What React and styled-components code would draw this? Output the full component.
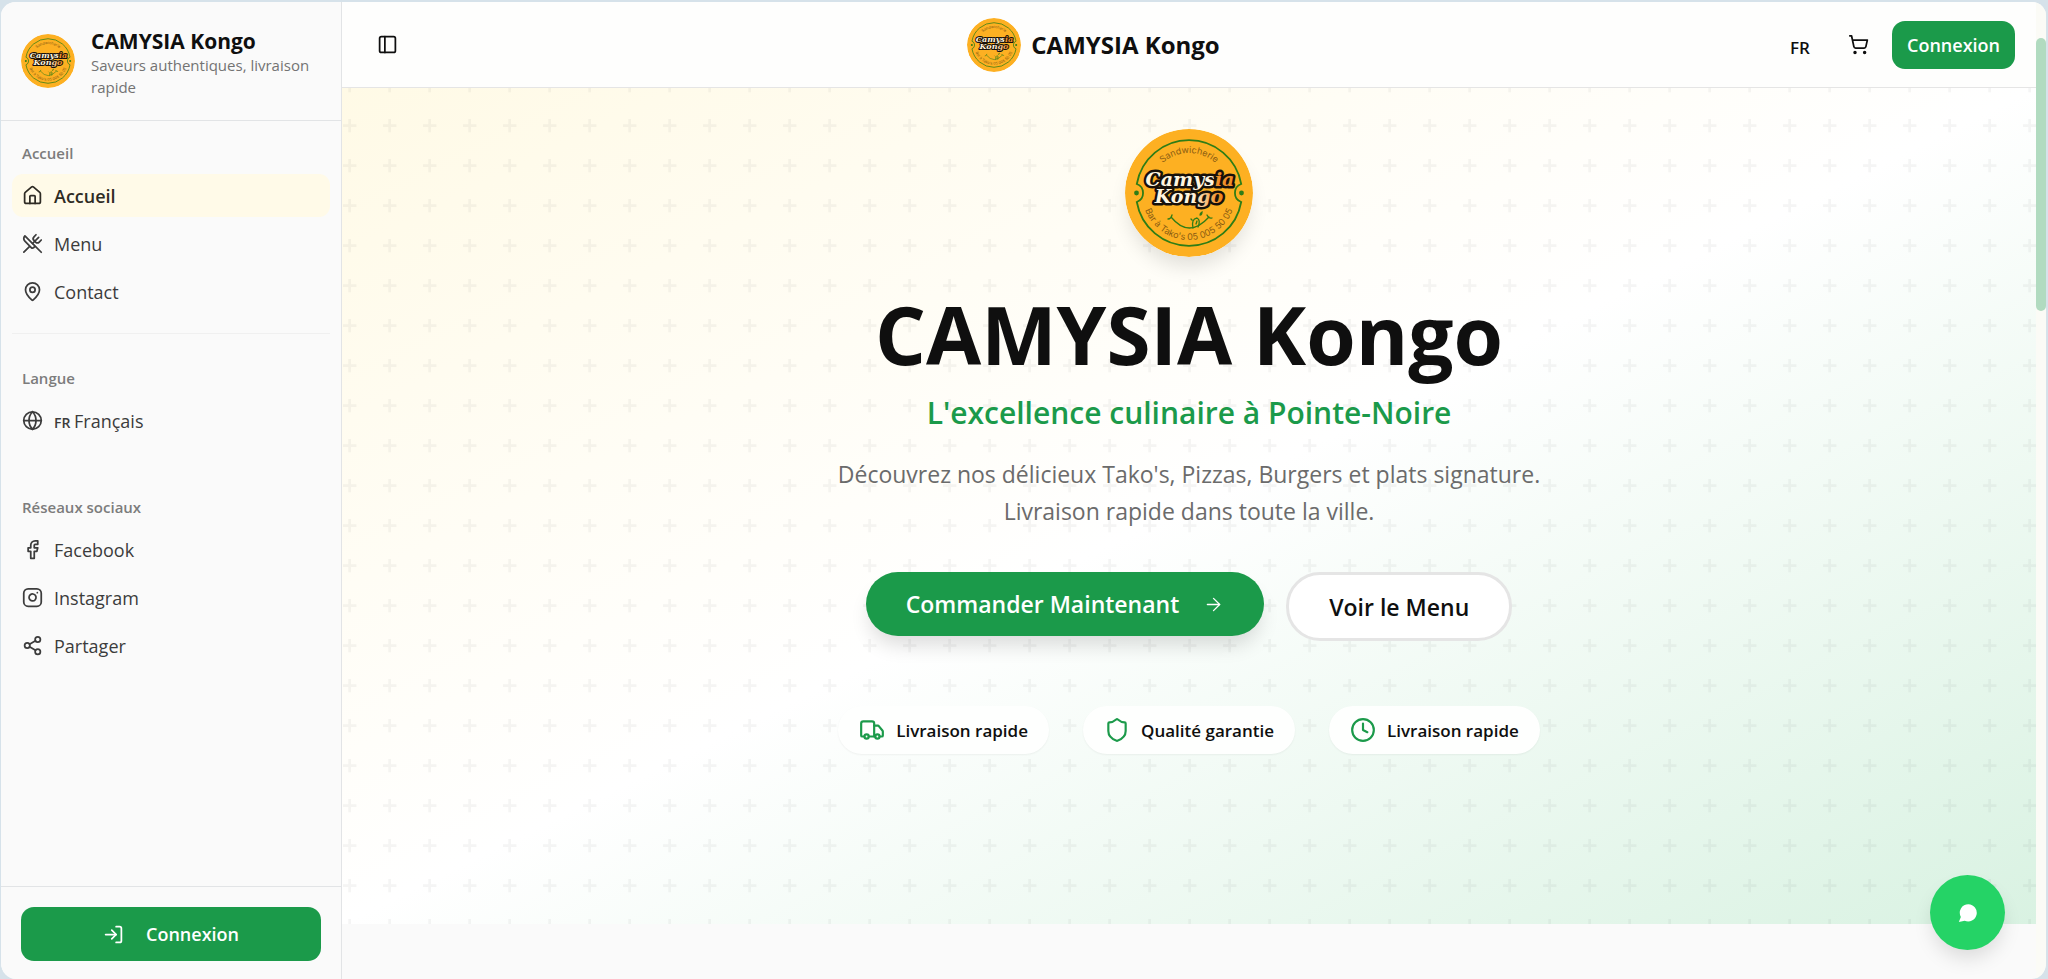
import React from "react";
import styled, { createGlobalStyle, css } from "styled-components";
import {
  ArrowRight,
  Clock,
  Facebook,
  Globe,
  House,
  Instagram,
  LogIn,
  MapPin,
  PanelLeft,
  Share2,
  Shield,
  ShoppingCart,
  Truck,
  UtensilsCrossed,
} from "lucide-react";

const green = "#1b9a4a";
const plusTile =
  "url(\"data:image/svg+xml,%3Csvg width='60' height='60' viewBox='0 0 60 60' xmlns='http://www.w3.org/2000/svg'%3E%3Cg fill='%23000' fill-opacity='0.04'%3E%3Cpath d='M36 34v-4h-2v4h-4v2h4v4h2v-4h4v-2h-4zm0-30V0h-2v4h-4v2h4v4h2V6h4V4h-4zM6 34v-4H4v4H0v2h4v4h2v-4h4v-2H6zM6 4V0H4v4H0v2h4v4h2V6h4V4H6z'/%3E%3C/g%3E%3C/svg%3E\")";

const GlobalStyle = createGlobalStyle`
  * {
    box-sizing: border-box;
    margin: 0;
    padding: 0;
  }
  body {
    background-color: #d6e2ea;
    color: #0f0f0f;
    font-family: "Open Sans", "Noto Sans", sans-serif;
    font-size: 18px;
  }
  button {
    font-family: inherit;
    cursor: pointer;
  }
  a {
    color: inherit;
    text-decoration: none;
  }
`;

const Window = styled.div`
  display: flex;
  height: 100vh;
  border: solid #d6e2ea;
  border-width: 2px 2px 0 1px;
  border-radius: 16px;
  overflow: hidden;
  background-color: #fafafa;
`;

const Sidebar = styled.aside`
  display: flex;
  flex-direction: column;
  width: 341px;
  flex-shrink: 0;
  border-right: 1px solid #e2e4e6;
  background-color: #fafafa;
`;

const Brand = styled.div`
  display: flex;
  align-items: center;
  gap: 16px;
  height: 119px;
  padding: 0 20px;
  border-bottom: 1px solid #e2e4e6;
`;

const BrandInfo = styled.div`
  padding-top: 4px;
`;

const BrandName = styled.h2`
  font-size: 21px;
  line-height: 26px;
  font-weight: 700;
`;

const BrandText = styled.p`
  font-size: 15px;
  line-height: 22px;
  color: #737373;
`;

const Nav = styled.nav`
  flex: 1;
`;

const Group = styled.section`
  padding: 11px 11px 20px;
  margin-bottom: ${({ $gap }) => $gap || 0}px;
`;

const GroupTitle = styled.h3`
  padding: 0 10px;
  line-height: 42px;
  font-size: 15px;
  font-weight: 600;
  color: #7c7c7c;
`;

const List = styled.ul`
  display: flex;
  flex-direction: column;
  gap: 5px;
  list-style: none;
`;

const NavLink = styled.a`
  display: flex;
  align-items: center;
  gap: 11px;
  height: 43px;
  padding: 0 10px;
  border-radius: 11px;
  color: #3c3c3c;
  ${({ $active }) =>
    $active &&
    css`
      background-color: #fffae8;
      color: #2e2b24;
      font-weight: 600;
    `}
`;

const Flag = styled.span`
  font-size: 14px;
  font-weight: 600;
`;

const Divider = styled.hr`
  margin: 0 11px 12px;
  border: none;
  border-top: 1px solid #f0f0f0;
`;

const SidebarFooter = styled.div`
  padding: 20px 20px 18px;
  border-top: 1px solid #e2e4e6;
`;

const Button = styled.button`
  display: flex;
  align-items: center;
  justify-content: center;
  gap: ${({ $gap }) => $gap || 0}px;
  width: ${({ $wide }) => ($wide ? "100%" : "auto")};
  height: ${({ $wide }) => ($wide ? 54 : 48)}px;
  padding: 0 15px;
  border: none;
  border-radius: 13px;
  background-color: ${green};
  color: #fff;
  font-size: 18px;
  font-weight: 600;
`;

const Main = styled.div`
  display: flex;
  flex-direction: column;
  flex: 1;
  min-width: 0;
`;

const Header = styled.header`
  display: flex;
  align-items: center;
  justify-content: space-between;
  height: 86px;
  flex-shrink: 0;
  padding: 0 21px;
  border-bottom: 1px solid #e5e5e5;
  background-color: #fefefd;
`;

const HeaderBrand = styled.div`
  display: flex;
  align-items: center;
  gap: 10px;
`;

const HeaderTitle = styled.span`
  font-size: 24px;
  font-weight: 700;
`;

const IconButton = styled.button`
  display: flex;
  align-items: center;
  justify-content: center;
  width: 48px;
  height: 48px;
  border: none;
  background: none;
  color: #0f0f0f;
`;

const LanguageButton = styled(IconButton)`
  padding-top: 6px;
  font-size: 17px;
  font-weight: 600;
`;

const Actions = styled.div`
  display: flex;
  align-items: center;
  justify-content: flex-end;
  gap: 10px;
`;

const Hero = styled.main`
  display: flex;
  flex-direction: column;
  align-items: center;
  height: 836px;
  flex-shrink: 0;
  padding-top: 41px;
  text-align: center;
  background-image: ${plusTile},
    linear-gradient(to bottom right, #fffae6, #ffffff 50%, #d9f2e2);
  background-size: 80px 80px, auto;
  background-position: 1px -9px, 0 0;
`;

const Badge = styled.svg`
  display: block;
  flex-shrink: 0;
  border-radius: 50%;
  ${({ $shadow }) =>
    $shadow && "box-shadow: 0 13px 20px -4px rgba(0, 0, 0, 0.12);"}
`;

const Title = styled.h1`
  margin-top: 31px;
  font-size: 80px;
  line-height: 92px;
  font-weight: 700;
`;

const Subtitle = styled.p`
  margin-top: 12px;
  font-size: 30px;
  line-height: 42px;
  font-weight: 600;
  color: ${green};
`;

const Lead = styled.p`
  max-width: 760px;
  margin-top: 22px;
  font-size: 23px;
  line-height: 37px;
  color: #6b6b6b;
`;

const Buttons = styled.div`
  display: flex;
  align-items: flex-start;
  gap: 22px;
  margin-top: 42px;
`;

const PillLink = styled.a`
  display: flex;
  align-items: center;
  gap: 24px;
  height: 64px;
  padding: 0 40px;
  border-radius: 34px;
  background-color: ${green};
  box-shadow: 0 13px 20px -4px rgba(0, 0, 0, 0.14);
  color: #fff;
  font-size: 23px;
  font-weight: 600;
  ${({ $outline }) =>
    $outline &&
    css`
      height: 69px;
      border: 3px solid #e5e5e5;
      background-color: #fff;
      box-shadow: none;
      color: #0f0f0f;
    `}
`;

const Features = styled.ul`
  display: flex;
  gap: 34px;
  margin-top: 65px;
  list-style: none;
`;

const Feature = styled.li`
  display: flex;
  align-items: center;
  gap: 11px;
  height: 48px;
  padding: 0 21px;
  border-radius: 24px;
  background-color: #fefffe;
  box-shadow: 0 1px 2px rgba(0, 0, 0, 0.05);
  font-size: 17px;
  font-weight: 600;
  svg {
    color: ${green};
  }
`;

const ScrollTrack = styled.div`
  width: 10px;
  flex-shrink: 0;
  padding-top: 36px;
  background-color: #fbfbf6;
`;

const ScrollThumb = styled.div`
  height: 273px;
  border-radius: 5px;
  background-color: #b1dbc0;
`;

const ChatButton = styled.button`
  position: fixed;
  right: 43px;
  bottom: 29px;
  display: flex;
  align-items: center;
  justify-content: center;
  width: 75px;
  height: 75px;
  border: none;
  border-radius: 50%;
  background-color: #25d366;
  box-shadow: 0 11px 20px -3px rgba(0, 0, 0, 0.13);
`;

const Logo = ({ size, id, shadow }) => (
  <Badge
    width={size}
    height={size}
    viewBox="0 0 128 128"
    $shadow={shadow}
    role="img"
    aria-label="Logo CAMYSIA Kongo"
  >
    <defs>
      <path id={`${id}-top`} d="M24 64 A40 40 0 0 1 104 64" />
      <path id={`${id}-bottom`} d="M17 64 A47 47 0 0 0 111 64" />
      <linearGradient id={`${id}-fade`} x1="0" x2="1">
        <stop offset="0.55" stopColor="#fff6e0" />
        <stop offset="0.95" stopColor="#f08a1c" />
      </linearGradient>
    </defs>
    <circle cx="64" cy="64" r="64" fill="#fdb022" />
    <path
      d="M11.8 55 A53 53 0 0 1 116.2 55 A9.6 9.6 0 0 0 116.2 73 A53 53 0 0 1 11.8 73 A9.6 9.6 0 0 0 11.8 55 Z"
      fill="none"
      stroke="#2f7d16"
      strokeWidth="1.8"
    />
    <circle cx="11.5" cy="64" r="2.4" fill="#2f7d16" />
    <circle cx="116.5" cy="64" r="2.4" fill="#2f7d16" />
    <g fontFamily="Inter, sans-serif" fill="#8a5c12" textAnchor="middle">
      <text fontSize="9">
        <textPath href={`#${id}-top`} startOffset="50%">
          Sandwicherie
        </textPath>
      </text>
      <text fontSize="9">
        <textPath href={`#${id}-bottom`} startOffset="50%">
          Bar à Tako's 05 005 50 05
        </textPath>
      </text>
    </g>
    <g
      fontFamily="DejaVu Serif, serif"
      fontSize="19"
      fontWeight="700"
      fontStyle="italic"
      textAnchor="middle"
      stroke="#17110b"
      strokeWidth="5"
      strokeLinejoin="round"
      paintOrder="stroke"
      fill="#fff6e0"
    >
      <text x="64" y="74" fill={`url(#${id}-fade)`}>
        Kongo
      </text>
      <text x="65" y="57">
        Camys<tspan fill="#f0902a">ia</tspan>
      </text>
    </g>
    <g fill="none" stroke="#2f7d16" strokeWidth="1.3" strokeLinecap="round">
      <path d="M46 88 Q64 110 84 88 M43 90 Q46 90 47 86 M82 86 Q84 90 87 89" />
      <path d="M68 99 Q66 90 72 89 Q76 91 73 98 M71 95 L72 92 M75 86 Q75 84 77 83 Q77 86 75 86 M66 90 L67 91" />
    </g>
  </Badge>
);

const groups = [
  {
    title: "Accueil",
    items: [
      { label: "Accueil", icon: House, active: true },
      { label: "Menu", icon: UtensilsCrossed },
      { label: "Contact", icon: MapPin },
    ],
  },
  {
    title: "Langue",
    gap: 13,
    divided: true,
    items: [{ label: "Français", icon: Globe, flag: "FR" }],
  },
  {
    title: "Réseaux sociaux",
    items: [
      { label: "Facebook", icon: Facebook },
      { label: "Instagram", icon: Instagram },
      { label: "Partager", icon: Share2 },
    ],
  },
];

const features = [
  { label: "Livraison rapide", icon: Truck },
  { label: "Qualité garantie", icon: Shield },
  { label: "Livraison rapide", icon: Clock },
];

const App = () => {
  return (
    <>
      <GlobalStyle />
      <Window>
        <Sidebar>
          <Brand>
            <Logo size={54} id="side" />
            <BrandInfo>
              <BrandName>CAMYSIA Kongo</BrandName>
              <BrandText>Saveurs authentiques, livraison rapide</BrandText>
            </BrandInfo>
          </Brand>
          <Nav>
            {groups.map((group) => (
              <React.Fragment key={group.title}>
                {group.divided && <Divider />}
                <Group $gap={group.gap}>
                  <GroupTitle>{group.title}</GroupTitle>
                  <List>
                    {group.items.map(({ label, icon: Icon, active, flag }) => (
                      <li key={label}>
                        <NavLink href="#" $active={active}>
                          <Icon size={21} />
                          <span>
                            {flag && <Flag>{flag} </Flag>}
                            {label}
                          </span>
                        </NavLink>
                      </li>
                    ))}
                  </List>
                </Group>
              </React.Fragment>
            ))}
          </Nav>
          <SidebarFooter>
            <Button $wide $gap={22}>
              <LogIn size={21} />
              Connexion
            </Button>
          </SidebarFooter>
        </Sidebar>
        <Main>
          <Header>
            <IconButton aria-label="Menu latéral">
              <PanelLeft size={21} />
            </IconButton>
            <HeaderBrand>
              <Logo size={54} id="head" />
              <HeaderTitle>CAMYSIA Kongo</HeaderTitle>
            </HeaderBrand>
            <Actions>
              <LanguageButton>FR</LanguageButton>
              <IconButton aria-label="Panier">
                <ShoppingCart size={21} />
              </IconButton>
              <Button>Connexion</Button>
            </Actions>
          </Header>
          <Hero>
            <Logo size={128} id="hero" shadow />
            <Title>CAMYSIA Kongo</Title>
            <Subtitle>L'excellence culinaire à Pointe-Noire</Subtitle>
            <Lead>
              Découvrez nos délicieux Tako's, Pizzas, Burgers et plats
              signature. Livraison rapide dans toute la ville.
            </Lead>
            <Buttons>
              <PillLink href="#">
                Commander Maintenant
                <ArrowRight size={21} strokeWidth={1.5} />
              </PillLink>
              <PillLink href="#" $outline>
                Voir le Menu
              </PillLink>
            </Buttons>
            <Features>
              {features.map(({ label, icon: Icon }, i) => (
                <Feature key={i}>
                  <Icon size={26} />
                  {label}
                </Feature>
              ))}
            </Features>
          </Hero>
        </Main>
        <ScrollTrack>
          <ScrollThumb />
        </ScrollTrack>
      </Window>
      <ChatButton aria-label="Discuter">
        <svg width="20" height="20" viewBox="0 0 24 24" fill="#fff">
          <path d="M12.5 1.5 A10.3 10.3 0 1 1 8 21.2 L1 22.8 L3.4 16.8 A10.3 10.3 0 0 1 12.5 1.5 Z" />
        </svg>
      </ChatButton>
    </>
  );
};

export default App;
